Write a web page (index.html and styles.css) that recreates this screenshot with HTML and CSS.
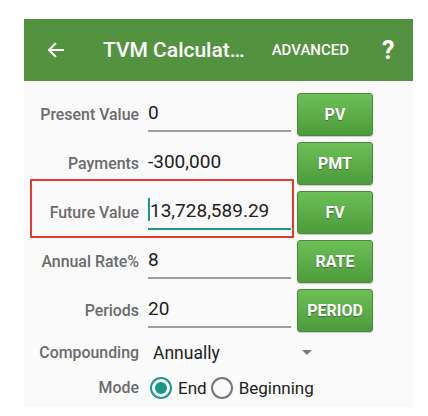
FILE: index.html
```html
<!DOCTYPE html>
<html lang="en">
<head>
  <meta charset="UTF-8" />
  <title>TVM Calculator</title>
  <link rel="stylesheet" href="styles.css">
</head>
<body>
  <div class="screen">
    <header class="appbar">
      <svg class="back" width="18" height="18" viewBox="0 0 18 18">
        <path d="M17 9H2M9 2L2 9l7 7" fill="none" stroke="#fff" stroke-width="2"/>
      </svg>
      <span class="title">TVM Calculat…</span>
      <span class="action">ADVANCED</span>
      <span class="help">?</span>
    </header>

    <div class="form">
      <div class="row">
        <label>Present Value</label>
        <div class="field">0</div>
        <button>PV</button>
      </div>
      <div class="row">
        <label>Payments</label>
        <div class="field">-300,000</div>
        <button>PMT</button>
      </div>
      <div class="row highlight">
        <label>Future Value</label>
        <div class="field active"><span class="caret"></span>13,728,589.29</div>
        <button>FV</button>
      </div>
      <div class="row">
        <label>Annual Rate%</label>
        <div class="field">8</div>
        <button>RATE</button>
      </div>
      <div class="row">
        <label>Periods</label>
        <div class="field">20</div>
        <button>PERIOD</button>
      </div>

      <div class="line compounding">
        <label>Compounding</label>
        <div class="select">
          <span>Annually</span>
          <span class="arrow"></span>
        </div>
      </div>

      <div class="line mode">
        <label>Mode</label>
        <div class="radios">
          <span class="radio checked"></span><span>End</span>
          <span class="radio"></span><span>Beginning</span>
        </div>
      </div>
    </div>
  </div>
</body>
</html>
```

FILE: styles.css
```css
body {
  margin: 0;
  background-color: #fff;
  font-family: Roboto, "Liberation Sans", sans-serif;
}

.screen {
  margin: 19px 0 0 24px;
  width: 389px;
  height: 388px;
  background-color: #fafafa;
}

.appbar {
  height: 62px;
  background-color: #53933f;
  color: #fff;
  display: flex;
  align-items: center;
}

.back {
  margin-left: 23px;
}

.title {
  margin-left: 38px;
  font-size: 21px;
  font-weight: 500;
}

.action {
  margin-left: 27px;
  font-size: 15px;
  font-weight: 500;
}

.help {
  margin-left: 33px;
  font-size: 25px;
  font-weight: 700;
}

.form {
  padding-top: 12px;
}

.row {
  position: relative;
  display: grid;
  grid-template-columns: 115px 143px 76px;
  column-gap: 9px;
  align-items: center;
  height: 43px;
  margin-bottom: 6px;
}

.row button {
  margin-left: -3px;
}

label {
  text-align: right;
  font-size: 15.9px;
  font-weight: 500;
  color: #6b6b6b;
}

.field {
  height: 34px;
  box-sizing: border-box;
  padding-top: 3px;
  border-bottom: 2px solid #9e9e9e;
  font-size: 19px;
  color: #212121;
  display: flex;
  align-items: flex-start;
}

.field.active {
  border-bottom-color: #1f9688;
}

.caret {
  width: 2px;
  height: 23px;
  margin-top: -1px;
  background-color: #1f9688;
}

button {
  height: 43px;
  width: 76px;
  border: 1px solid #4a8c38;
  border-radius: 3px;
  background: linear-gradient(#6cc057, #4d9b3b);
  color: #fff;
  font-family: Roboto, "Liberation Sans", sans-serif;
  font-size: 16px;
  font-weight: 700;
  text-shadow: 0 1px 1px rgba(0, 0, 0, 0.35);
  box-shadow: 0 1px 1px rgba(0, 0, 0, 0.2);
  padding: 0;
}

.highlight::after {
  content: "";
  position: absolute;
  left: 6px;
  top: -12px;
  width: 264px;
  height: 59px;
  box-sizing: border-box;
  border: 2px solid #e53a30;
}

.line {
  display: grid;
  grid-template-columns: 115px 1fr;
  column-gap: 9px;
  align-items: center;
  height: 35px;
}

.compounding {
  margin-top: -3px;
}

.select {
  display: flex;
  align-items: center;
  width: 159px;
  padding-left: 5px;
  font-size: 17.5px;
  color: #212121;
}

.select span:first-child {
  flex: 1;
}

.arrow {
  width: 0;
  height: 0;
  border-left: 5px solid transparent;
  border-right: 5px solid transparent;
  border-top: 5px solid #7a7a7a;
}

.radios {
  display: flex;
  align-items: center;
  font-size: 17px;
  color: #212121;
}

.radio {
  width: 22px;
  height: 22px;
  box-sizing: border-box;
  border: 2px solid #757575;
  border-radius: 50%;
  margin: 0 6px 0 2px;
  position: relative;
}

.radio + span + .radio {
  margin-left: 4px;
}

.radio.checked {
  border-color: #1a9986;
}

.radio.checked::after {
  content: "";
  position: absolute;
  left: 3px;
  top: 3px;
  width: 12px;
  height: 12px;
  border-radius: 50%;
  background-color: #1a9986;
}
```
